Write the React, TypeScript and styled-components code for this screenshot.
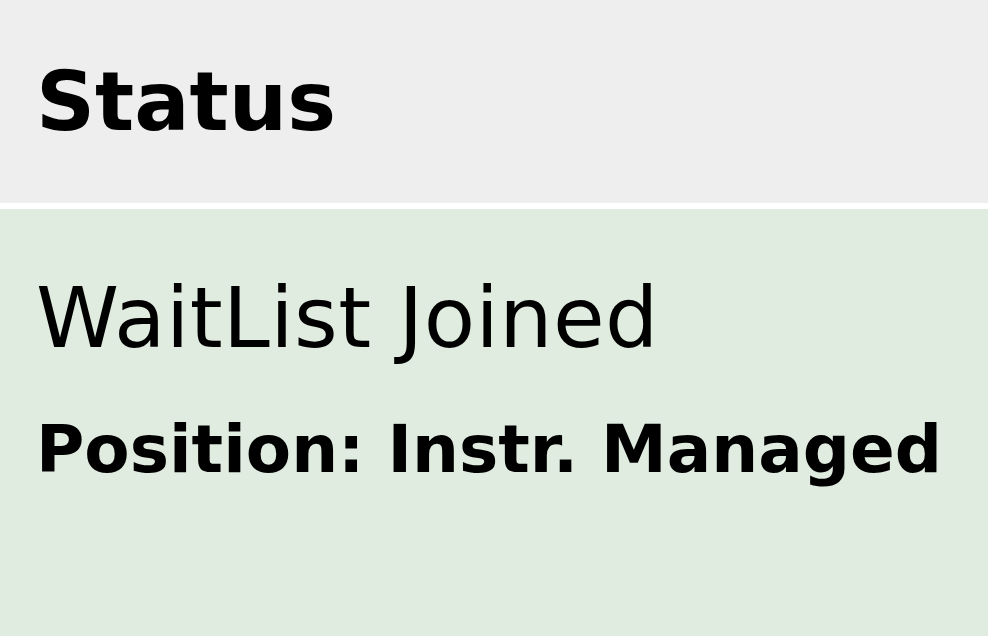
import React from 'react';
import styled, { createGlobalStyle } from 'styled-components';

const GlobalStyle = createGlobalStyle`
  html, body {
    margin: 0;
    padding: 0;
    background: #ffffff;
  }
  body {
    font-family: "DejaVu Sans", Verdana, sans-serif;
    color: #000;
  }
`;

const StatusTable = styled.div`
  display: flex;
  flex-direction: column;
  gap: 6px;
  width: 100%;
  height: 636px;
  overflow: hidden;
`;

const HeaderCell = styled.div`
  background: #eeeeee;
  height: 203px;
  box-sizing: border-box;
  padding: 53px 36px 0;
`;

const HeaderTitle = styled.h2`
  margin: 0;
  font-size: 82px;
  font-weight: bold;
  line-height: 98px;
`;

const BodyCell = styled.div<{ $tone?: string }>`
  flex: 1;
  background: ${(p) => p.$tone || '#e1ece0'};
  box-sizing: border-box;
  padding: 60px 36px 0;
  display: flex;
  flex-direction: column;
  gap: 43px;
`;

const StatusText = styled.div`
  font-size: 84px;
  line-height: 98px;
  letter-spacing: 0.4px;
  white-space: nowrap;
`;

const PositionText = styled.div`
  font-size: 66px;
  font-weight: bold;
  line-height: 80px;
  white-space: nowrap;
`;

const App: React.FC = () => {
  return (
    <>
      <GlobalStyle />
      <StatusTable>
        <HeaderCell>
          <HeaderTitle>Status</HeaderTitle>
        </HeaderCell>
        <BodyCell>
          <StatusText>WaitList Joined</StatusText>
          <PositionText>Position: Instr. Managed</PositionText>
        </BodyCell>
      </StatusTable>
    </>
  );
};

export default App;
